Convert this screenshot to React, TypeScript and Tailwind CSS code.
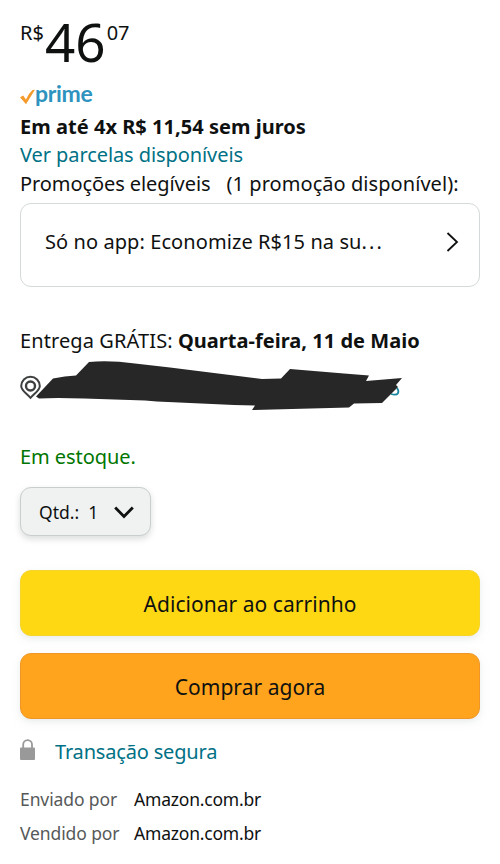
import type { ReactNode } from "react";
import { clsx } from "clsx";

interface ActionButtonProps {
  readonly className: string;
  readonly children: ReactNode;
}

function ActionButton({ className, children }: ActionButtonProps) {
  return (
    <button
      className={clsx(
        "flex h-[66px] w-full items-center justify-center rounded-[11px] border pt-[2px] text-[21px] tracking-[0.04px] shadow-[0_3px_7px_rgba(213,217,217,0.5)]",
        className,
      )}
    >
      {children}
    </button>
  );
}

interface SellerRowProps {
  readonly label: string;
  readonly value: string;
}

function SellerRow({ label, value }: SellerRowProps) {
  return (
    <div className="flex h-[34px] items-center text-[17.5px]">
      <dt className="w-[114px] tracking-[-0.1px] text-[#565959]">{label}</dt>
      <dd className="tracking-[-0.2px]">{value}</dd>
    </div>
  );
}

function Price() {
  return (
    <div className="flex h-[84px] items-start pt-[19px]">
      <span className="w-[25px] text-xl leading-7">R$</span>
      <span className="text-[53px] leading-[45px]">46</span>
      <span className="ml-px text-xl leading-7">07</span>
    </div>
  );
}

function PrimeBadge() {
  return (
    <div className="flex h-[29px] items-start">
      <svg width="15" height="28" viewBox="0 0 15 28" fill="none">
        <path d="M0 13.2 L3.2 11.4 L5.9 15.6 Q8.5 9.5 12.5 6 L15 5.8 Q10.8 12.5 6 20.2 Z" fill="#f49b2c" />
      </svg>
      <span className="font-['Lato',sans-serif] text-[23px] leading-[19px] font-bold tracking-[-0.3px] text-[#2e93be]">
        prime
      </span>
    </div>
  );
}

function DeliveryAddress() {
  return (
    <svg className="-ml-5 block" width="420" height="60" viewBox="0 354 420 60" fill="none">
      <path d="M30.5 396.8 C26 391.8 21.2 389.5 21.2 385 A9.3 9.3 0 0 1 39.8 385 C39.8 389.5 35 391.8 30.5 396.8 Z" stroke="#3d3f40" strokeWidth="2" />
      <circle cx="30.5" cy="385" r="4.5" stroke="#3d3f40" strokeWidth="2.4" />
      <path d="M391 393 C399 395.5 399.5 390.5 397 387" stroke="#1685a0" strokeWidth="1.8" />
      <path
        d="M36 395.5 L53 377.5 Q65 375 76 374.5 L89 361 Q109 359 135 362.5 L170 366.5 L262 378 L281 377.5 L290 368 L344 372.5 L369 374.5 L366 380 L402 377 L396 384 L398 386 L382 402 L354 402.5 L349 406.5 Q300 408 252 409 L255 404.5 L234 404 L157 400.5 L145 399.5 L84 397.5 Q55 396.5 39 397.5 Z"
        fill="#272727"
      />
    </svg>
  );
}

export default function App() {
  return (
    <main className="h-[864px] w-[500px] overflow-hidden bg-white px-5 font-['Noto_Sans',sans-serif] text-xl leading-7 whitespace-nowrap text-[#0f1111]">
      <Price />
      <PrimeBadge />
      <p className="font-bold tracking-[0.03px]">Em até 4x R$ 11,54 sem juros</p>
      <a className="block tracking-[-0.08px] text-[#007185]">Ver parcelas disponíveis</a>
      <p className="pt-px">
        <span className="tracking-[-0.08px]">Promoções elegíveis</span>
        <span className="ml-4 tracking-[0.06px]">(1 promoção disponível):</span>
      </p>

      <section className="mt-[5px] flex h-[84px] items-start justify-between rounded-[11px] border border-[#d5d9d9] pt-6 pr-5 pl-6">
        <span className="tracking-[0.08px]">
          Só no app: Economize R$15 na su<span className="tracking-[2.2px]">...</span>
        </span>
        <svg className="mt-1" width="13" height="20" viewBox="0 0 13 20" fill="none">
          <path d="M1.5 1 L11 10 L1.5 19" stroke="#0f1111" strokeWidth="1.8" />
        </svg>
      </section>

      <p className="mt-10">
        <span className="tracking-[0.1px]">Entrega GRÁTIS: </span>
        <b className="tracking-[0.03px]">Quarta-feira, 11 de Maio</b>
      </p>
      <DeliveryAddress />

      <p className="mt-7 tracking-[-0.06px] text-[#007600]">Em estoque.</p>
      <button className="mt-4 flex h-[49px] w-[131px] items-center rounded-[11px] border border-[#c9cece] bg-[#f0f2f2] pl-[18px] text-[17.5px] shadow-[0_3px_6px_rgba(15,17,17,0.15)]">
        <span>Qtd.:</span>
        <span className="ml-[9px]">1</span>
        <svg className="mt-px mr-4 ml-auto" width="20" height="13" viewBox="0 0 20 13" fill="none">
          <path d="M1.2 1.5 L10 10.5 L18.8 1.5" stroke="#0f1111" strokeWidth="2.8" />
        </svg>
      </button>

      <div className="mt-[34px] flex flex-col gap-[17px]">
        <ActionButton className="border-[#f5d52b] bg-[#ffd814]">Adicionar ao carrinho</ActionButton>
        <ActionButton className="border-[#ee9728] bg-[#ffa41c]">Comprar agora</ActionButton>
      </div>

      <div className="mt-[19px] flex h-7 items-start">
        <svg className="mt-px mr-5" width="15" height="22" viewBox="0 0 15 22" fill="none">
          <path d="M3.2 9 V5.5 A4.4 4.4 0 0 1 12 5.5 V9" stroke="#999" strokeWidth="1.8" />
          <rect y="8.5" width="15" height="12.5" rx="1" fill="#999" />
        </svg>
        <a className="tracking-[-0.18px] text-[#007185]">Transação segura</a>
      </div>

      <dl className="mt-4">
        <SellerRow label="Enviado por" value="Amazon.com.br" />
        <SellerRow label="Vendido por" value="Amazon.com.br" />
      </dl>
    </main>
  );
}
